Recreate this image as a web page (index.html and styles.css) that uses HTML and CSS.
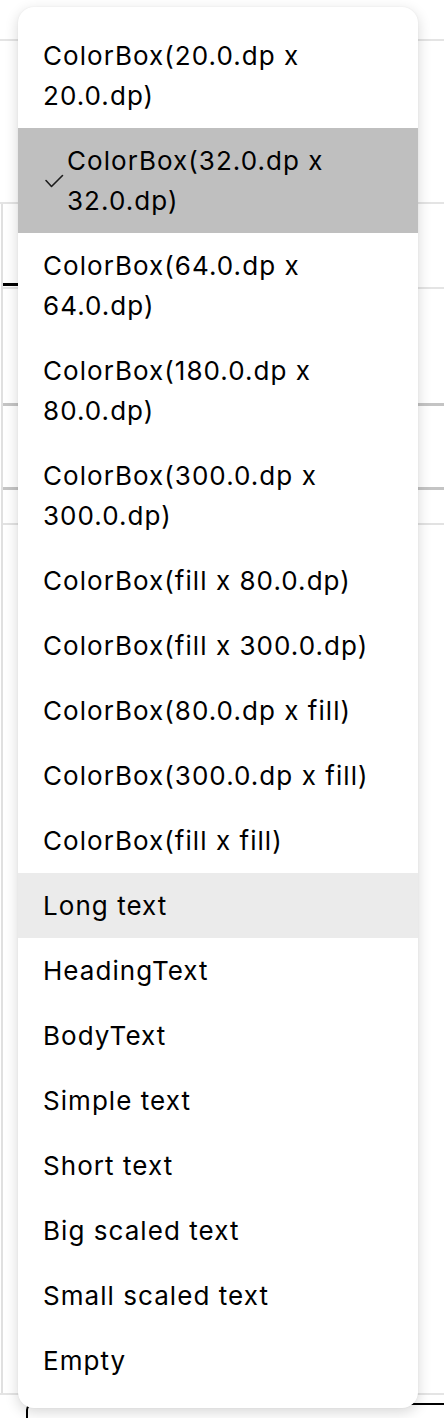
FILE: index.html
```html
<!DOCTYPE html>
<html lang="en">
<head>
    <meta charset="UTF-8">
    <meta name="viewport" content="width=device-width, initial-scale=1.0">
    <title>Preview menu</title>
    <link rel="stylesheet" href="styles.css">
</head>
<body>
    <div class="toolbar"></div>
    <div class="filters"></div>

    <div class="panel">
        <div class="tabs">
            <div class="tab active"></div>
        </div>
        <div class="row tall"></div>
        <div class="row dark"></div>
        <div class="row mid"></div>
        <div class="row rest"></div>
    </div>

    <div class="footer">
        <div class="field"></div>
    </div>

    <ul class="menu">
        <li class="item">ColorBox(20.0.dp x<br>20.0.dp)</li>
        <li class="item selected">
            <svg class="check" width="24" height="24" viewBox="0 0 24 24">
                <polyline points="3,11.5 8.5,17.5 19.5,6.5" fill="none" stroke="#1d1d1d" stroke-width="1.6" stroke-linecap="round" stroke-linejoin="round"/>
            </svg>
            <span>ColorBox(32.0.dp x<br>32.0.dp)</span>
        </li>
        <li class="item">ColorBox(64.0.dp x<br>64.0.dp)</li>
        <li class="item">ColorBox(180.0.dp x<br>80.0.dp)</li>
        <li class="item">ColorBox(300.0.dp x<br>300.0.dp)</li>
        <li class="item">ColorBox(fill x 80.0.dp)</li>
        <li class="item">ColorBox(fill x 300.0.dp)</li>
        <li class="item">ColorBox(80.0.dp x fill)</li>
        <li class="item">ColorBox(300.0.dp x fill)</li>
        <li class="item">ColorBox(fill x fill)</li>
        <li class="item hover">Long text</li>
        <li class="item">HeadingText</li>
        <li class="item">BodyText</li>
        <li class="item">Simple text</li>
        <li class="item">Short text</li>
        <li class="item">Big scaled text</li>
        <li class="item">Small scaled text</li>
        <li class="item">Empty</li>
    </ul>
</body>
</html>
```

FILE: styles.css
```css
body{
    margin: 0;
    background-color: #ffffff;
    font-family: Inter, "Liberation Sans", sans-serif;
    overflow: hidden;
    height: 1418px;
}

/* page behind the menu */
.toolbar{
    height: 39px;
    border-bottom: 2px solid #e4e4e4;
}
.filters{
    height: 161px;
    border-bottom: 2px solid #e4e4e4;
}
.panel{
    margin-left: 1px;
    border-left: 2px solid #e0e0e0;
    height: 1189px;
}
.tabs{
    height: 83px;
    border-bottom: 2px solid #e4e4e4;
    display: flex;
    align-items: flex-end;
}
.tab.active{
    width: 120px;
    height: 3px;
    margin-bottom: 1px;
    background-color: #000000;
}
.row.tall{
    height: 114px;
    border-bottom: 3px solid #c4c4c4;
}
.row.dark{
    height: 81px;
    border-bottom: 3px solid #c4c4c4;
}
.row.mid{
    height: 33px;
    border-bottom: 2px solid #e2e2e2;
}
.footer{
    border-top: 2px solid #e4e4e4;
    padding: 8px 0 0 26px;
}
.field{
    height: 40px;
    border: 2px solid #000000;
    border-radius: 7px;
    margin-right: -20px;
}

/* dropdown */
.menu{
    position: absolute;
    left: 18px;
    top: 7px;
    width: 400px;
    margin: 0;
    padding: 16px 0 15px;
    list-style: none;
    background-color: #ffffff;
    border-radius: 16px;
    box-shadow: 0 4px 14px rgba(0, 0, 0, 0.16), 0 0 2px rgba(0, 0, 0, 0.06);
}
.item{
    display: flex;
    align-items: center;
    padding: 12.5px 25px;
    font-size: 26px;
    line-height: 40px;
    color: #000000;
    letter-spacing: 1.05px;
}
.item.selected{
    background-color: #bfbfbf;
}
.item.hover{
    background-color: #ebebeb;
}
.check{
    flex: none;
}
```
